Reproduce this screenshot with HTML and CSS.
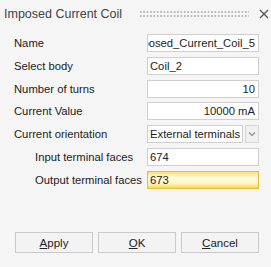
FILE: index.html
```html
<!DOCTYPE html>
<html lang="en">
<head>
    <meta charset="UTF-8">
    <meta name="viewport" content="width=device-width, initial-scale=1.0">
    <title>Imposed Current Coil</title>
    <link rel="stylesheet" href="styles.css">
</head>
<body>
    <div class="dialog">
        <div class="titlebar">
            <span class="title">Imposed Current Coil</span>
            <span class="grip"></span>
            <svg class="close" width="10" height="10" viewBox="0 0 10 10">
                <path d="M1 1 L9 9 M9 1 L1 9" stroke="#555" stroke-width="1.3" fill="none"/>
            </svg>
        </div>

        <div class="form">
            <label>Name</label>
            <div class="field end"><span>Imposed_Current_Coil_5</span></div>

            <label>Select body</label>
            <div class="field">Coil_2</div>

            <label>Number of turns</label>
            <div class="field right">10</div>

            <label>Current Value</label>
            <div class="field right">10000 mA</div>

            <label>Current orientation</label>
            <div class="combo">
                <div class="field">External terminals</div>
                <div class="arrow">
                    <svg width="8" height="6" viewBox="0 0 8 6">
                        <path d="M1 1.5 L4 4.5 L7 1.5" stroke="#888" stroke-width="1.1" fill="none"/>
                    </svg>
                </div>
            </div>

            <label class="sub">Input terminal faces</label>
            <div class="field">674</div>

            <label class="sub">Output terminal faces</label>
            <div class="field active">673</div>
        </div>

        <div class="buttons">
            <button><u>A</u>pply</button>
            <button><u>O</u>K</button>
            <button><u>C</u>ancel</button>
        </div>
    </div>
</body>
</html>
```

FILE: styles.css
```css
body {
    margin: 0;
    padding: 0;
    font-family: "Liberation Sans", Arial, sans-serif;
    background-color: #f5f5f5;
}
.dialog {
    width: 271px;
    height: 267px;
    display: flex;
    flex-direction: column;
    background-color: #f5f5f5;
}
.titlebar {
    height: 28px;
    display: flex;
    align-items: center;
    padding-left: 4px;
}
.title {
    font-size: 12.5px;
    color: #444;
}
.grip {
    width: 110px;
    height: 8px;
    margin-left: 17px;
    background: radial-gradient(circle, #bbb 0.8px, transparent 1.1px) 0 0 / 3.4px 4px;
}
.close {
    margin-left: 10px;
}
.form {
    display: grid;
    grid-template-columns: 133px 112px;
    grid-auto-rows: 18px;
    row-gap: 4.8px;
    align-items: center;
    padding-left: 14px;
    margin-top: 6px;
    font-size: 11.25px;
    color: #222;
}
.form label.sub {
    padding-left: 21px;
}
.field {
    height: 18px;
    box-sizing: border-box;
    border: 1px solid #cfcfcf;
    background: #fff;
    padding: 0 3px 0 2px;
    display: flex;
    align-items: center;
    white-space: nowrap;
    overflow: hidden;
    color: #222;
}
.field.right {
    justify-content: flex-end;
}
.field.end {
    justify-content: flex-end;
}
.field.active {
    border-color: #e2bd45;
    background: linear-gradient(#ffe070, #fffbe0 35%, #fff6c4 70%, #ffd84a);
}
.combo {
    display: flex;
    gap: 2px;
}
.combo .field {
    flex: 1;
}
.arrow {
    width: 14px;
    height: 18px;
    box-sizing: border-box;
    border: 1px solid #d6d6d6;
    background: #f0f0f0;
    display: flex;
    align-items: center;
    justify-content: center;
}
.buttons {
    margin-top: auto;
    display: flex;
    gap: 5px;
    padding: 0 0 14px 15px;
}
.buttons button {
    width: 78px;
    height: 21px;
    border: 1px solid #cacaca;
    background: #f3f3f3;
    font-family: "Liberation Sans", Arial, sans-serif;
    font-size: 11.5px;
    color: #222;
    padding: 0;
}
```
